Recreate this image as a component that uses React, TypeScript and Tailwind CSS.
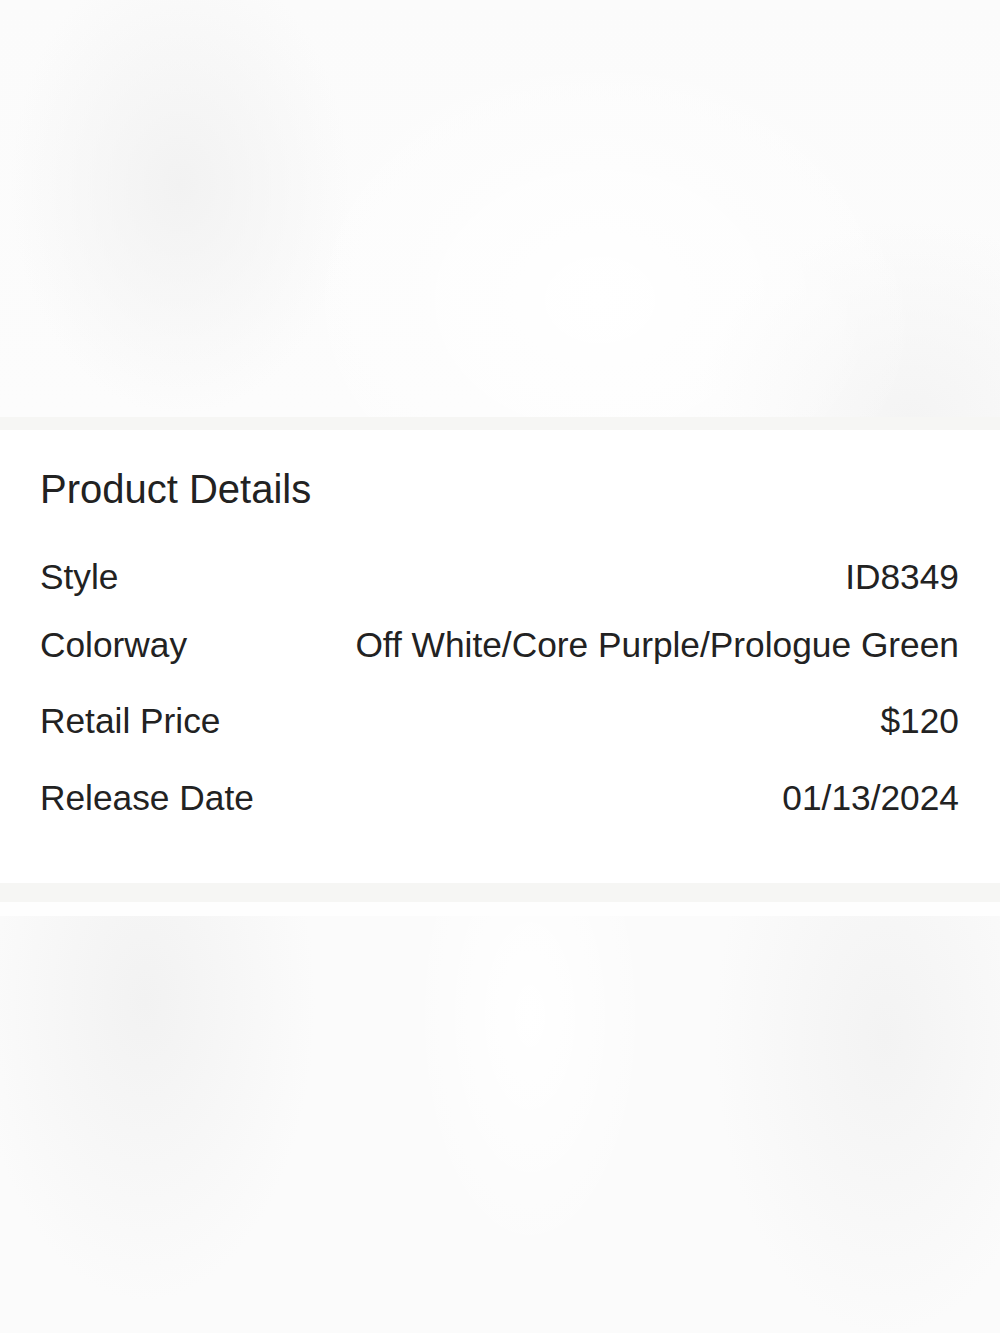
const details = [
  { label: "Style", value: "ID8349", gap: "mt-0" },
  { label: "Colorway", value: "Off White/Core Purple/Prologue Green", gap: "mt-[28px]" },
  { label: "Retail Price", value: "$120", gap: "mt-[36px]" },
  { label: "Release Date", value: "01/13/2024", gap: "mt-[37px]" },
];

export default function App() {
  return (
    <div className="w-[1000px] h-[1333px] overflow-hidden bg-[#f6f6f4] font-['Liberation_Sans',Arial,sans-serif] text-[#222]">
      {/* product image (blurred placeholder) */}
      <div className="h-[417px] bg-[#fafafa] bg-[radial-gradient(ellipse_170px_230px_at_180px_185px,#f2f2f2,transparent),radial-gradient(ellipse_330px_260px_at_600px_300px,#ffffff,transparent),radial-gradient(ellipse_220px_200px_at_910px_420px,#f4f4f4,transparent),linear-gradient(#fbfbfb,#fcfcfc)]" />

      <section className="mt-[13px] bg-white pl-10 pr-[41px] pt-9 pb-[65px]">
        <h2 className="text-[40px] leading-[46px] font-normal">Product Details</h2>
        <div className="mt-[45px]">
          {details.map((d) => (
            <div key={d.label} className={`${d.gap} flex items-center justify-between text-[35.3px] leading-[40px]`}>
              <span>{d.label}</span>
              <span className="text-right">{d.value}</span>
            </div>
          ))}
        </div>
      </section>

      <div className="mt-[19px] bg-[#fefefe] pt-[14px]">
        <div className="h-[417px] bg-[#fbfbfb] bg-[radial-gradient(ellipse_170px_300px_at_145px_85px,#f2f2f2,transparent),radial-gradient(ellipse_170px_300px_at_885px_120px,#f3f3f3,transparent),radial-gradient(ellipse_120px_250px_at_530px_100px,#ffffff,transparent)]" />
      </div>
    </div>
  );
}
